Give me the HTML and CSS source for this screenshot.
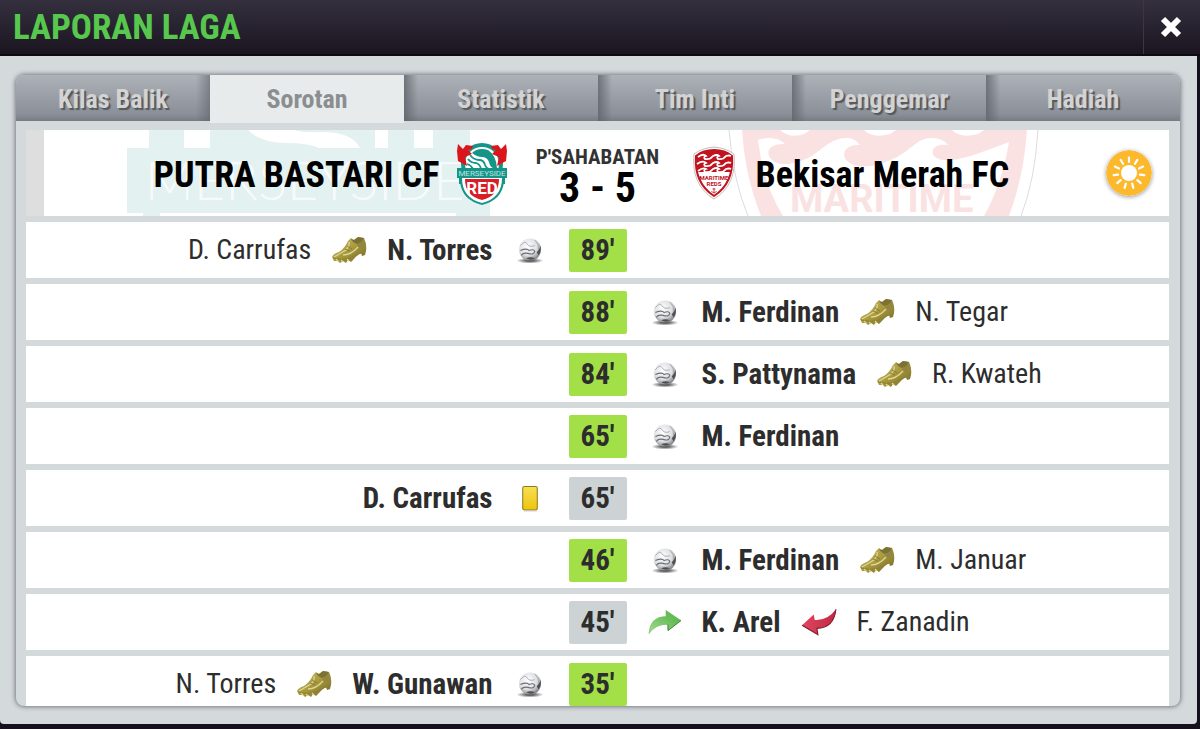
FILE: index.html
```
<!DOCTYPE html>
<html lang="id">
<head>
<meta charset="utf-8">
<title>Laporan Laga</title>
<meta name="viewport" content="width=device-width, initial-scale=1">
<link rel="stylesheet" href="styles.css">
</head>
<body>
<svg class="sprite" aria-hidden="true">
  <defs>
    <linearGradient id="gold" x1="0" y1="0" x2="1" y2="1">
      <stop offset="0" stop-color="#cfc27c"/><stop offset=".5" stop-color="#a99a3c"/><stop offset="1" stop-color="#6f6424"/>
    </linearGradient>
    <radialGradient id="leather" cx=".4" cy=".35" r=".7">
      <stop offset="0" stop-color="#ffffff"/><stop offset=".6" stop-color="#dddee2"/><stop offset="1" stop-color="#77787c"/>
    </radialGradient>
    <radialGradient id="shade">
      <stop offset="0" stop-color="#222"/><stop offset="1" stop-color="#222" stop-opacity="0"/>
    </radialGradient>
    <linearGradient id="in" x1="0" y1="1" x2="1" y2="0">
      <stop offset="0" stop-color="#a5dc97"/><stop offset=".6" stop-color="#6cc05c"/><stop offset="1" stop-color="#4fae42"/>
    </linearGradient>
    <linearGradient id="out" x1="0" y1="0" x2="1" y2="0">
      <stop offset="0" stop-color="#e0465f"/><stop offset="1" stop-color="#c02a42"/>
    </linearGradient>
    <linearGradient id="yellow" x1="0" y1="0" x2="0" y2="1">
      <stop offset="0" stop-color="#f7df55"/><stop offset="1" stop-color="#eec40c"/>
    </linearGradient>
  </defs>
  <symbol id="boot" viewBox="0 0 36 28">
    <path d="M1 21 Q2 18 8 16 Q14 12 17 5 L20 2 L23 4 L27 1 L33 2 Q36 8 35 15 L34 19 L31 20 L30 17 Q25 20 22 24 L20 26 L17 24 L15 27 L12 25 L9 27 L7 25 L3 25 Z" fill="url(#gold)"/>
    <path d="M20 3 Q22 7 26 8 Q31 7 33 2 L27 1 L23 4 Z" fill="#7d7236"/>
    <path d="M26 8 Q27 13 34 13 Q35 8 33 3 Q31 7 26 8 Z" fill="#93873f"/>
    <path d="M3 21 Q10 17 15 14 Q19 10 18 6 M12 19 Q20 19 27 11" fill="none" stroke="#dfd594" stroke-width="1.3"/>
    <path d="M14 13 L19 15 M16 10 L21 13" stroke="#7d7236" stroke-width=".8"/>
    <path d="M2 22 Q12 25 20 22 Q27 17 34 16" fill="none" stroke="#8b7f36" stroke-width="1"/>
    <path d="M5 23 l2 2 M10 24 l2 2 M16 23 l2 2" stroke="#e1d68c" stroke-width="1.2"/>
  </symbol>
  <symbol id="ball" viewBox="0 0 30 28">
    <ellipse cx="15" cy="24.500" rx="14" ry="3" fill="url(#shade)"/>
    <circle cx="15" cy="13" r="11.500" fill="url(#leather)"/>
    <path d="M5 9 Q10 3 12 7 T20 9 M20 3 Q25 8 24 13" fill="none" stroke="#a3a5aa" stroke-width=".9"/>
    <path d="M5 14 Q12 11 14 14 Q19 12 20 15 Q19 19 13 17 Q8 16 6 19" fill="none" stroke="#6c6e74" stroke-width="1.200"/>
    <path d="M26 9 Q27 15 24 19 L22 16 Q25 13 26 9 Z M11 22 Q16 20 20 22 Q16 25 11 22 Z" fill="#4e5054"/>
  </symbol>
  <symbol id="sub-in" viewBox="0 0 34 26">
    <path d="M1 24 Q2 7 18 7 L18 1 L33 11 L20 21 L20 15 Q8 14 1 24 Z" fill="url(#in)" stroke="#6fbb60" stroke-width=".6"/>
    <path d="M20 15 L20 21 L33 11" fill="none" stroke="#3f9035" stroke-width="1"/>
  </symbol>
  <symbol id="sub-out" viewBox="0 0 34 26">
    <path d="M33 1 Q31 19 15 19 L16 25 L1 16 L12 6 L13 11 Q25 12 33 1 Z" fill="url(#out)"/>
    <path d="M33 1 Q31 19 15 19 L16 25 L1 16" fill="none" stroke="#86182c" stroke-width="1"/>
  </symbol>
  <symbol id="card" viewBox="0 0 16 26">
    <rect x="1" y="1.500" width="14" height="22.500" rx="1.500" fill="url(#yellow)" stroke="#8f7b1d" stroke-width="1"/>
    <path d="M2 25 H15" stroke="#ccc" stroke-width="1"/>
  </symbol>
</svg>

<header class="titlebar">
  <h1 class="title">LAPORAN LAGA</h1>
  <button class="close" type="button" aria-label="Tutup">
    <svg width="22" height="22" viewBox="0 0 22 22" aria-hidden="true"><path d="M3 3 L19 19 M19 3 L3 19" stroke="#fff" stroke-width="6"/></svg>
  </button>
</header>

<main class="window">
  <section class="panel">
    <nav class="tabs" role="tablist">
      <button class="tab" type="button" role="tab">Kilas Balik</button>
      <button class="tab tab-active" type="button" role="tab" aria-selected="true">Sorotan</button>
      <button class="tab tab-after" type="button" role="tab">Statistik</button>
      <button class="tab tab-after" type="button" role="tab">Tim Inti</button>
      <button class="tab tab-after" type="button" role="tab">Penggemar</button>
      <button class="tab tab-after" type="button" role="tab">Hadiah</button>
    </nav>

    <div class="content">
      <div class="match">
        <div class="team team-home">
          <svg class="watermark" width="400" height="86" viewBox="0 0 400 86" aria-hidden="true">
            <g fill="#e3f1f0">
              <path d="M13 18 H376 V86 H342 V83 H46 V86 H29 V83 H13 Z"/>
              <path d="M35 0 H70 V18 H35 Z M96 0 H261 V18 H96 Z M274 0 H300 V18 H274 Z M319 0 H356 V18 H319 Z"/>
            </g>
            <path d="M134 0 Q146 13 172 13 Q194 13 205 18 H246 Q238 2 208 2 Q190 3 180 0 Z" fill="#fff"/>
            <text class="mark-home" x="31" y="70">MERSEYSIDE</text>
          </svg>
          <h2 class="team-name">PUTRA BASTARI CF</h2>
          <svg class="crest" width="64" height="66" viewBox="0 0 64 66" role="img" aria-label="Merseyside Red">
            <circle cx="32" cy="24" r="21" fill="#159488"/>
            <path d="M10 28 H54 V42 Q52 60 32 65 Q12 60 10 42 Z" fill="#159488"/>
            <circle cx="32" cy="24" r="17" fill="#fff"/>
            <path d="M22 13 Q28 7 38 10 Q46 15 47 28 H43 Q40 27 39 22 Q37 17 32 17 Q27 17 22 13 Z" fill="#159488"/>
            <path d="M20 15 Q24 20 29 20 Q34 20 35 25 Q36 28 39 29 M18 19 Q21 23 26 23 Q30 24 31 29 M17 24 Q21 25 23 29" fill="none" stroke="#159488" stroke-width="1.800"/>
            <path d="M8 4 L13 9 L16 5 L23 6 L22 9 L18 10 L22 14 L15 17 L17 26 L8 21 L7 11 Z M56 4 L51 9 L48 5 L41 6 L42 9 L46 10 L42 14 L49 17 L47 26 L56 21 L57 11 Z" fill="#dc151c"/>
            <path d="M12 38 H52 Q52 58 32 63 Q12 58 12 38 Z" fill="#fff"/>
            <path d="M15 39 H49 Q49 56 32 60 Q15 56 15 39 Z" fill="#d91c25"/>
            <path d="M7 28 H57 V38 H55 V44 H53 V38 H11 V44 H9 V38 H7 Z" fill="#159488"/>
            <text class="crest-band" x="32" y="36" text-anchor="middle">MERSEYSIDE</text>
            <text class="crest-red" x="32" y="54" text-anchor="middle">RED</text>
          </svg>
        </div>
        <div class="result">
          <p class="competition">P'SAHABATAN</p>
          <p class="score">3 - 5</p>
        </div>
        <div class="team team-away">
          <svg class="watermark" width="400" height="86" viewBox="0 0 400 86" aria-hidden="true">
            <path d="M47 0 Q51 50 66 86 M356 0 Q353 50 339 86" fill="none" stroke="#dcdcdc" stroke-width="1"/>
            <path d="M60 0 H345 Q342 46 327 86 H79 Q63 46 60 0 Z" fill="#fae2e3"/>
            <path d="M76 10 C86 6 98 8 103 14 C91 13 84 19 87 26 C94 39 114 34 128 27 C140 20 150 7 166 8 Q174 9 178 15 C164 14 159 23 164 30 C176 43 204 34 220 24 C232 16 238 7 251 8 Q262 9 266 15 C253 13 248 20 252 26 C264 38 300 22 327 12 Q320 54 302 86 H101 Q81 54 76 10 Z" fill="#fff"/>
            <path d="M98 0 Q108 9 122 4 L128 0 Z M182 0 Q192 9 208 4 L214 0 Z M270 0 Q280 9 296 4 L302 0 Z" fill="#fff"/>
            <text class="mark-away" x="108" y="82">MARITIME</text>
          </svg>
          <svg class="crest" width="64" height="66" viewBox="0 0 64 66" role="img" aria-label="Maritime Reds">
            <path d="M32 7 Q44 8 52 14 Q55 45 32 59 Q9 45 12 14 Q20 8 32 7 Z" fill="#fff" stroke="#c9bdb5" stroke-width="1"/>
            <path d="M32 10 Q43 10 50 16 Q52 43 32 56 Q12 43 14 16 Q21 10 32 10 Z" fill="#fff" stroke="#c0141f" stroke-width="2"/>
            <path d="M14 16 Q22 10 32 10 Q42 10 50 16 L49 32 H15 Z" fill="#c0141f"/>
            <path d="M16 17 q5 -4 8 -1 q-3 1 -1 3 q5 1 8 -3 q4 -2 6 0 q-3 1 -1 3 q5 1 8 -3 q3 -1 5 0 M15 24 q6 -4 9 -1 q-3 1 -1 3 q5 1 8 -3 q4 -2 6 0 q-3 1 -1 3 q5 1 8 -3 q3 -1 5 0 M16 31 q5 -4 8 -2 q-3 1 -1 3 q5 1 8 -3 q4 -2 6 0 q-3 1 -1 3 q5 1 8 -3 q3 -1 5 0" fill="none" stroke="#fff" stroke-width="1.800"/>
            <text class="crest-text" x="32" y="40" text-anchor="middle">MARITIME</text>
            <text class="crest-text" x="32" y="46" text-anchor="middle">REDS</text>
            <path d="M32 48 V53 M29.500 51 Q32 55 34.500 51 M30.500 49 H33.500" fill="none" stroke="#c0141f" stroke-width=".8"/>
          </svg>
          <h2 class="team-name">Bekisar Merah FC</h2>
          <svg class="weather" width="46" height="46" viewBox="0 0 46 46" role="img" aria-label="Cerah">
            <circle cx="23" cy="23" r="23" fill="#fdb92e"/>
            <circle cx="23" cy="23" r="8" fill="#fff"/>
            <g stroke="#fff" stroke-width="2.200" stroke-linecap="round">
              <path id="ray" d="M23 7.500 V12"/>
              <use href="#ray" transform="rotate(32.700 23 23)"/><use href="#ray" transform="rotate(65.500 23 23)"/>
              <use href="#ray" transform="rotate(98.200 23 23)"/><use href="#ray" transform="rotate(130.900 23 23)"/>
              <use href="#ray" transform="rotate(163.600 23 23)"/><use href="#ray" transform="rotate(196.400 23 23)"/>
              <use href="#ray" transform="rotate(229.100 23 23)"/><use href="#ray" transform="rotate(261.800 23 23)"/>
              <use href="#ray" transform="rotate(294.500 23 23)"/><use href="#ray" transform="rotate(327.300 23 23)"/>
            </g>
          </svg>
        </div>
      </div>

      <ol class="events">
        <li class="event">
          <div class="side side-home"><span>D. Carrufas</span><svg class="boot"><use href="#boot"/></svg><strong>N. Torres</strong><svg class="kind"><use href="#ball"/></svg></div>
          <time class="minute goal">89'</time>
        </li>
        <li class="event">
          <time class="minute goal">88'</time>
          <div class="side side-away"><svg class="kind"><use href="#ball"/></svg><strong>M. Ferdinan</strong><svg class="boot"><use href="#boot"/></svg><span>N. Tegar</span></div>
        </li>
        <li class="event">
          <time class="minute goal">84'</time>
          <div class="side side-away"><svg class="kind"><use href="#ball"/></svg><strong>S. Pattynama</strong><svg class="boot"><use href="#boot"/></svg><span>R. Kwateh</span></div>
        </li>
        <li class="event">
          <time class="minute goal">65'</time>
          <div class="side side-away"><svg class="kind"><use href="#ball"/></svg><strong>M. Ferdinan</strong></div>
        </li>
        <li class="event">
          <div class="side side-home"><strong>D. Carrufas</strong><svg class="kind"><use href="#card"/></svg></div>
          <time class="minute">65'</time>
        </li>
        <li class="event">
          <time class="minute goal">46'</time>
          <div class="side side-away"><svg class="kind"><use href="#ball"/></svg><strong>M. Ferdinan</strong><svg class="boot"><use href="#boot"/></svg><span>M. Januar</span></div>
        </li>
        <li class="event">
          <time class="minute">45'</time>
          <div class="side side-away"><svg class="kind"><use href="#sub-in"/></svg><strong>K. Arel</strong><svg class="boot"><use href="#sub-out"/></svg><span>F. Zanadin</span></div>
        </li>
        <li class="event">
          <div class="side side-home"><span>N. Torres</span><svg class="boot"><use href="#boot"/></svg><strong>W. Gunawan</strong><svg class="kind"><use href="#ball"/></svg></div>
          <time class="minute goal">35'</time>
        </li>
      </ol>
    </div>
  </section>
</main>
</body>
</html>
```

FILE: styles.css
```
* { box-sizing: border-box; }

body {
  margin: 0;
  height: 100vh;
  display: flex;
  flex-direction: column;
  background: #14101c;
  color: #2d2d2d;
  font-family: "Roboto Condensed", "Liberation Sans Narrow", "Arial Narrow", sans-serif;
}

h1, h2, p, ol { margin: 0; padding: 0; }

.sprite { position: absolute; width: 0; height: 0; }

.titlebar {
  flex: none;
  display: flex;
  justify-content: space-between;
  height: 56px;
  padding-left: 13px;
  background: linear-gradient(#35303e, #1a1520);
  border-bottom: 2px solid #0d0a12;
}

.title {
  padding-top: 2px;
  color: #57c84d;
  font-size: 35px;
  line-height: 52px;
}

.close {
  display: flex;
  align-items: center;
  justify-content: center;
  width: 57px;
  padding: 0 2px 0 0;
  border: 0;
  border-left: 1px solid #3b3544;
  background: none;
}

.window {
  flex: 1;
  min-height: 0;
  display: flex;
  margin: 0 3px 5px 0;
  padding: 19px 17px 18px 16px;
  border-radius: 0 0 4px 4px;
  background: #d4d9dc;
}

.panel {
  flex: 1;
  display: flex;
  flex-direction: column;
  overflow: hidden;
  border-radius: 8px;
  background: #d4d9db;
  box-shadow: 0 0 4px 1px #777c82;
}

.tabs {
  flex: none;
  display: flex;
  height: 46px;
}

.tab {
  flex: 1;
  padding: 2px 0 0;
  border: 0;
  background: linear-gradient(to left, #5f646b99, #5f646b00 14px), linear-gradient(#adb2b9, #8b9098 85%, #777b82);
  color: #d3d3d3;
  font-family: inherit;
  font-size: 26px;
  font-weight: 700;
  text-shadow: 2px 2px 1px #55585c;
}

.tab-after {
  background: linear-gradient(to right, #5f646bcc, #5f646b00 14px), linear-gradient(#adb2b9, #8b9098 85%, #777b82);
}

.tab-active {
  height: 48px;
  padding: 0;
  background: #e7ebec;
  color: #8b8e91;
  text-shadow: none;
}

.content {
  flex: 1;
  min-height: 0;
  display: flex;
  flex-direction: column;
  gap: 6px;
  padding: 9px 11px 0 10px;
}

.match {
  flex: none;
  display: grid;
  grid-template-columns: 1fr 168px 1fr;
  height: 86px;
  background: linear-gradient(to right, #dedede 18px, #fff 18px);
}

.team {
  position: relative;
  display: flex;
  align-items: center;
  gap: 10px;
  color: #000;
}

.team-home { justify-content: flex-end; }
.team-away { padding-right: 17px; }

.team-name {
  position: relative;
  padding-top: 4px;
  font-size: 36px;
  line-height: 40px;
  white-space: nowrap;
}

.crest { position: relative; flex: none; }

.weather {
  position: relative;
  margin-left: auto;
  border-radius: 50%;
  box-shadow: 0 1px 4px #999;
}

.watermark { position: absolute; top: 0; }
.team-home .watermark { right: 0; }
.team-away .watermark { left: 0; }

.mark-home { font: 300 54px Lato, sans-serif; fill: #fff; opacity: .7; }
.mark-away { font: 700 38px Roboto, sans-serif; fill: #fae2e3; }
.crest-band { font: 400 8px Roboto, sans-serif; fill: #bfe6e0; }
.crest-red { font: 700 17px Roboto, sans-serif; fill: #fff; }
.crest-text { font: 700 6px Roboto, sans-serif; fill: #c0141f; }

.result {
  display: flex;
  flex-direction: column;
  justify-content: center;
  align-items: center;
  padding-top: 6px;
  font-weight: 700;
}

.competition { font-size: 21px; line-height: 24px; color: #333; }
.score { font-size: 42px; line-height: 38px; color: #000; }

.events {
  display: flex;
  flex-direction: column;
  gap: 6px;
  list-style: none;
}

.event {
  flex: none;
  display: grid;
  grid-template-columns: 1fr 58px 1fr;
  align-items: center;
  height: 56px;
  background: #fff;
  font-size: 29px;
  line-height: 34px;
}

.minute {
  grid-column: 2;
  grid-row: 1;
  border-radius: 2px;
  background: #cdd2d4;
  font-weight: 700;
  line-height: 43px;
  text-align: center;
}

.goal { background: #a3e048; }

.side {
  grid-row: 1;
  display: flex;
  align-items: center;
  gap: 20px;
  white-space: nowrap;
}

.side span { font-size: 28px; }

.side-home { grid-column: 1; justify-content: flex-end; padding-right: 22px; }
.side-away { grid-column: 3; padding-left: 21px; }

.kind { width: 34px; height: 27px; }
.boot { width: 36px; height: 28px; }
```
